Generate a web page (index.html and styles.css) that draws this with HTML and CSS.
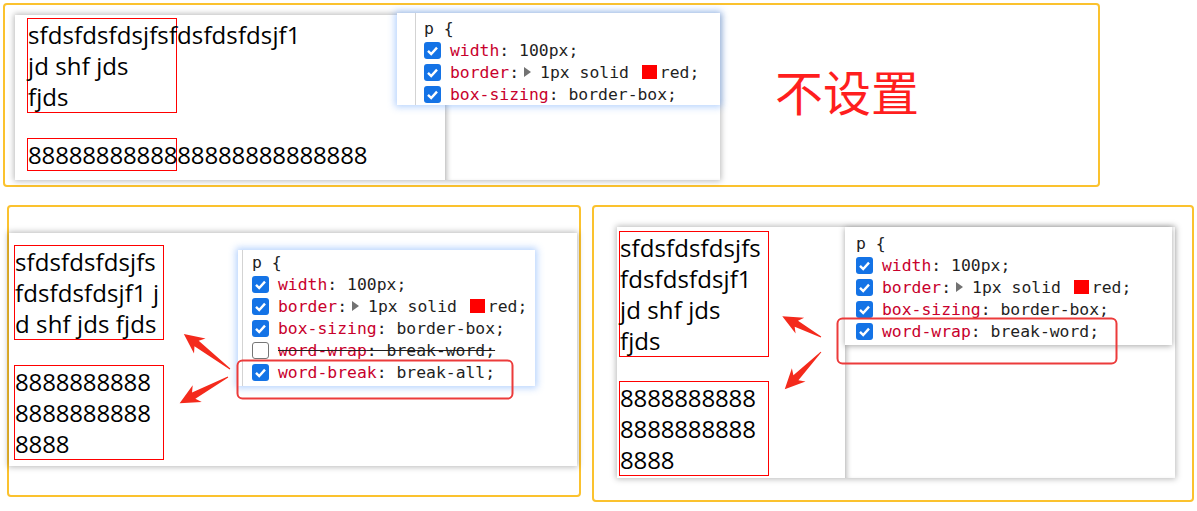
FILE: index.html
```html
<!DOCTYPE html>
<html lang="zh">
<head>
<meta charset="utf-8">
<title>word-break demo</title>
<link rel="stylesheet" href="styles.css">
</head>
<body>
<div class="stage">
  <section class="panel panel-top">
    <div class="shot shot-1">
      <div class="page page-1">
        <p class="box">sfdsfdsfdsjfsfdsfdsfdsjf1<br>jd shf jds<br>fjds</p>
        <p class="box num">8888888888888888888888888</p>
      </div>
      <div class="tools"></div>
      <div class="rule rule-1 glow">
        <div class="gutter">
          <div class="row head">p {</div>
          <div class="row"><svg class="cb" viewBox="0 0 17 17"><rect width="17" height="17" rx="3" fill="#1473e6"/><path d="M4 8.8l3.2 3.2L13 5.6" fill="none" stroke="#fff" stroke-width="2.4"/></svg><span class="pn">width</span>:&nbsp;100px;</div>
          <div class="row"><svg class="cb" viewBox="0 0 17 17"><rect width="17" height="17" rx="3" fill="#1473e6"/><path d="M4 8.8l3.2 3.2L13 5.6" fill="none" stroke="#fff" stroke-width="2.4"/></svg><span class="pn">border</span>:<span class="tri"></span>1px&nbsp;solid&nbsp;<span class="sw"></span>red;</div>
          <div class="row"><svg class="cb" viewBox="0 0 17 17"><rect width="17" height="17" rx="3" fill="#1473e6"/><path d="M4 8.8l3.2 3.2L13 5.6" fill="none" stroke="#fff" stroke-width="2.4"/></svg><span class="pn">box-sizing</span>:&nbsp;border-box;</div>
        </div>
      </div>
    </div>
    <div class="label">不设置</div>
  </section>

  <div class="bottom">
    <section class="panel panel-a">
      <div class="shot shot-2">
        <div class="page page-2">
          <p class="box">sfdsfdsfdsjfs<br>fdsfdsfdsjf1 j<br>d shf jds fjds</p>
          <p class="box num">8888888888<br>8888888888<br>8888</p>
        </div>
        <div class="rule rule-2 glow">
          <div class="gutter">
            <div class="row head">p {</div>
            <div class="row"><svg class="cb" viewBox="0 0 17 17"><rect width="17" height="17" rx="3" fill="#1473e6"/><path d="M4 8.8l3.2 3.2L13 5.6" fill="none" stroke="#fff" stroke-width="2.4"/></svg><span class="pn">width</span>:&nbsp;100px;</div>
            <div class="row"><svg class="cb" viewBox="0 0 17 17"><rect width="17" height="17" rx="3" fill="#1473e6"/><path d="M4 8.8l3.2 3.2L13 5.6" fill="none" stroke="#fff" stroke-width="2.4"/></svg><span class="pn">border</span>:<span class="tri"></span>1px&nbsp;solid&nbsp;<span class="sw"></span>red;</div>
            <div class="row"><svg class="cb" viewBox="0 0 17 17"><rect width="17" height="17" rx="3" fill="#1473e6"/><path d="M4 8.8l3.2 3.2L13 5.6" fill="none" stroke="#fff" stroke-width="2.4"/></svg><span class="pn">box-sizing</span>:&nbsp;border-box;</div>
            <div class="row"><span class="cb off"></span><span class="strike"><span class="pn">word-wrap</span>:&nbsp;break-word;</span></div>
            <div class="row"><svg class="cb" viewBox="0 0 17 17"><rect width="17" height="17" rx="3" fill="#1473e6"/><path d="M4 8.8l3.2 3.2L13 5.6" fill="none" stroke="#fff" stroke-width="2.4"/></svg><span class="pn">word-break</span>:&nbsp;break-all;</div>
          </div>
        </div>
      </div>
    </section>

    <section class="panel panel-b">
      <div class="shot shot-3">
        <div class="page page-3">
          <p class="box">sfdsfdsfdsjfs<br>fdsfdsfdsjf1<br>jd shf jds<br>fjds</p>
          <p class="box num">8888888888<br>8888888888<br>8888</p>
        </div>
        <div class="tools"></div>
        <div class="rule rule-3">
          <div class="row head">p {</div>
          <div class="row"><svg class="cb" viewBox="0 0 17 17"><rect width="17" height="17" rx="3" fill="#1473e6"/><path d="M4 8.8l3.2 3.2L13 5.6" fill="none" stroke="#fff" stroke-width="2.4"/></svg><span class="pn">width</span>:&nbsp;100px;</div>
          <div class="row"><svg class="cb" viewBox="0 0 17 17"><rect width="17" height="17" rx="3" fill="#1473e6"/><path d="M4 8.8l3.2 3.2L13 5.6" fill="none" stroke="#fff" stroke-width="2.4"/></svg><span class="pn">border</span>:<span class="tri"></span>1px&nbsp;solid&nbsp;<span class="sw"></span>red;</div>
          <div class="row"><svg class="cb" viewBox="0 0 17 17"><rect width="17" height="17" rx="3" fill="#1473e6"/><path d="M4 8.8l3.2 3.2L13 5.6" fill="none" stroke="#fff" stroke-width="2.4"/></svg><span class="pn">box-sizing</span>:&nbsp;border-box;</div>
          <div class="row"><svg class="cb" viewBox="0 0 17 17"><rect width="17" height="17" rx="3" fill="#1473e6"/><path d="M4 8.8l3.2 3.2L13 5.6" fill="none" stroke="#fff" stroke-width="2.4"/></svg><span class="pn">word-wrap</span>:&nbsp;break-word;</div>
          <div class="row"><span class="cb off"></span></div>
        </div>
      </div>
    </section>
  </div>

  <svg class="overlay" width="1197" height="511" viewBox="0 0 1197 511">
    <rect x="237.5" y="357.5" width="275" height="38" rx="5" fill="none" stroke="#ec3b3b" stroke-width="2"/>
    <rect x="837.5" y="315.5" width="279" height="45" rx="5" fill="none" stroke="#ec3b3b" stroke-width="2"/>
    <g fill="#f42a1c">
      <polygon transform="translate(230 366) rotate(-142.73)" points="0,-0.5 42,-3.5 38,-9.5 58,0 38,9.5 42,3.5 0,0.5"/>
      <polygon transform="translate(228 374) rotate(151.56)" points="0,-0.5 39,-3.5 35,-9.5 55,0 35,9.5 39,3.5 0,0.5"/>
      <polygon transform="translate(821 334) rotate(-151.7)" points="0,-0.5 28,-3.5 24,-9 44,0 24,9 28,3.5 0,0.5"/>
      <polygon transform="translate(821 349) rotate(134.2)" points="0,-0.5 36,-3.5 32,-9.5 52,0 32,9.5 36,3.5 0,0.5"/>
    </g>
  </svg>
</div>
</body>
</html>
```

FILE: styles.css
```css
html, body {
  margin: 0;
  padding: 0;
  background: #fff;
}
body {
  width: 1197px;
  height: 511px;
  overflow: hidden;
}
.stage {
  position: relative;
  width: 1197px;
  height: 511px;
}

/* yellow frames */
.panel {
  box-sizing: border-box;
  border: 2px solid #fbc22e;
  border-radius: 4px;
  position: relative;
}
.panel-top {
  margin: 3px 0 0 3px;
  width: 1097px;
  height: 184px;
  padding: 10px;
  display: flex;
  align-items: flex-start;
}
.bottom {
  display: flex;
  align-items: flex-start;
  gap: 11px;
  margin-top: 18px;
  padding-left: 7px;
}
.panel-a {
  width: 574px;
  height: 292px;
  padding-top: 26px;
}
.panel-b {
  width: 602px;
  height: 297px;
  padding: 20px 0 0 23px;
}

/* screenshot cards */
.shot {
  position: relative;
  display: flex;
  background: #fff;
  box-shadow: 0 0 6px 1px rgba(0, 0, 0, 0.28);
}
.shot-1 { width: 705px; height: 165px; }
.shot-2 { width: 568px; height: 233px; }
.shot-3 { width: 558px; height: 251px; }

.page {
  box-sizing: border-box;
  font-family: "Open Sans", "Noto Sans", sans-serif;
  font-size: 24px;
  line-height: 31px;
  color: #000;
}
.page-1 { width: 430px; padding: 3px 0 0 12px; }
.page-2 { width: 300px; padding: 12px 0 0 5px; }
.page-3 { width: 228px; padding: 4px 0 0 2px; }

.box {
  box-sizing: border-box;
  width: 150px;
  margin: 0 0 25px 0;
  border: 1px solid #ff0000;
  white-space: nowrap;
  letter-spacing: 0.1px;
}
.box.num { letter-spacing: -0.15px; }
.page-3 .box { margin-bottom: 24px; }

.tools {
  flex: 1;
  border-left: 1px solid #cdcdcd;
  box-shadow: inset 4px 0 5px -3px rgba(0, 0, 0, 0.25);
}

.label {
  margin: 51px 0 0 55px;
  font-family: "Noto Sans CJK SC", sans-serif;
  font-size: 48px;
  line-height: 48px;
  color: #ff1e1e;
}

/* devtools rule popups */
.rule {
  position: absolute;
  box-sizing: border-box;
  background: #fff;
  font-family: "DejaVu Sans Mono", "Liberation Mono", monospace;
  font-size: 16.4px;
  color: #1f1f1f;
}
.glow {
  box-shadow: 0 0 7px 2px rgba(90, 155, 250, 0.45);
}
.rule-1 {
  left: 382px;
  top: -2px;
  width: 323px;
  height: 92px;
  padding-left: 18px;
}
.rule-1 .gutter {
  height: 100%;
  border-left: 1px solid #d3d3d3;
  padding: 4px 0 0 8px;
  box-sizing: border-box;
}
.rule-2 {
  left: 229px;
  top: 17px;
  width: 297px;
  height: 136px;
  padding-left: 4px;
}
.rule-2 .gutter {
  height: 100%;
  border-left: 1px solid #d3d3d3;
  padding: 1px 0 0 9px;
  box-sizing: border-box;
}
.rule-3 {
  left: 228px;
  top: 0;
  width: 327px;
  height: 118px;
  padding: 5px 0 0 11px;
  overflow: hidden;
  box-shadow: 0 1px 6px rgba(0, 0, 0, 0.35);
}

.row {
  display: flex;
  align-items: center;
  height: 22px;
  white-space: nowrap;
}
.head {
  color: #202124;
}
.cb {
  flex: none;
  width: 17px;
  height: 17px;
  margin-right: 9px;
}
.cb.off {
  box-sizing: border-box;
  border: 1px solid #767676;
  border-radius: 3px;
  background: #fff;
}
.pn {
  color: #c8002c;
}
.strike {
  text-decoration: line-through;
  text-decoration-color: #1f1f1f;
}
.tri {
  width: 0;
  height: 0;
  margin: 0 9px 0 5px;
  border-top: 5px solid transparent;
  border-bottom: 5px solid transparent;
  border-left: 7px solid #727272;
}
.sw {
  width: 15px;
  height: 14px;
  margin: 0 3px 0 3px;
  background: #ff0000;
}

.overlay {
  position: absolute;
  left: 0;
  top: 0;
  pointer-events: none;
}
```
